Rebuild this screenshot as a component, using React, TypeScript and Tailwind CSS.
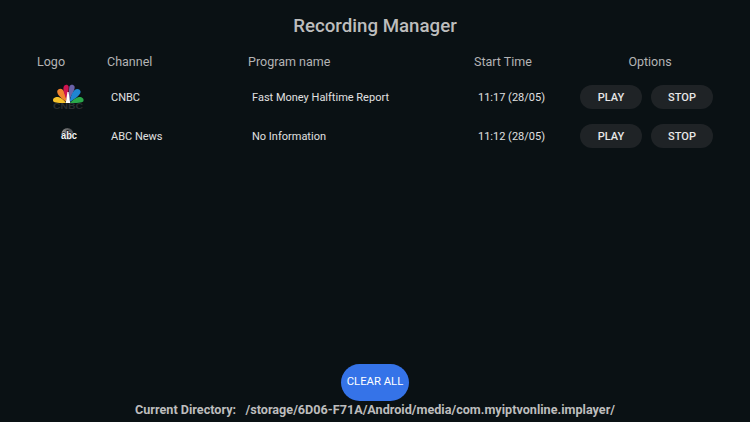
const rows = [
  { logo: "cnbc", channel: "CNBC", program: "Fast Money Halftime Report", time: "11:17 (28/05)" },
  { logo: "abc", channel: "ABC News", program: "No Information", time: "11:12 (28/05)" },
]

function CnbcLogo() {
  // feathers fan out from the white wedge in the middle
  return (
    <svg width="34" height="26" viewBox="0 0 34 26" className="ml-[14px] block">
      <path d="M15 19 C9 19 3 19 2.2 17.2 C1 14 5 12.4 8 13.2 C11 14.2 14 17 15 19 Z" fill="#f5c22b" />
      <path d="M15.4 18 C11 15 6 11 6.2 7.6 C6.6 4.6 10 4 12 6 C14 8.4 15.2 14 15.4 18 Z" fill="#f0842e" />
      <path d="M16 16 C14 12 11.6 6 12.6 3 C13.6 0 17 0.2 17.6 2.6 C18 5 16.8 12 16 16 Z" fill="#cf1550" />
      <path d="M18 16 C18 11 17.8 5 18.4 2.6 C19.2 0 22.6 0 23.6 2.6 C24.4 5.4 20 12.4 18 16 Z" fill="#6b62a8" />
      <path d="M18.6 18 C19 14 21.4 8 23.6 6 C26 4 29.4 5 29.6 7.8 C29.8 11 23 15.6 18.6 18 Z" fill="#1f85d2" />
      <path d="M19 19 C21 16.6 24 14 27 13.2 C30.4 12.4 33.4 14.4 32.4 17.2 C31.6 19 25 19 19 19 Z" fill="#2aa84a" />
      <path d="M14.8 19 L16.4 8 L17.6 8 L19.2 19 Z" fill="#ffffff" />
      <text x="17" y="25.4" textAnchor="middle" fontFamily="Liberation Sans, sans-serif" fontWeight="700" fontSize="8.5" textLength="30" lengthAdjust="spacingAndGlyphs" fill="#2b2f32">
        CNBC
      </text>
    </svg>
  )
}

function AbcLogo() {
  return (
    <svg width="18" height="16" viewBox="0 0 18 16" className="ml-[23px] block">
      <defs>
        <linearGradient id="abc-globe" x1="0" y1="1" x2="1" y2="0">
          <stop offset="0" stopColor="#dcdcdc" />
          <stop offset="1" stopColor="#2c2e30" />
        </linearGradient>
      </defs>
      <circle cx="7.5" cy="6" r="6" fill="url(#abc-globe)" />
      <text x="9" y="11.4" textAnchor="middle" fontFamily="Liberation Sans, sans-serif" fontWeight="700" fontSize="10" textLength="16" lengthAdjust="spacingAndGlyphs" stroke="#0a1114" strokeWidth="1.4" paintOrder="stroke" fill="#f4f4f4">
        abc
      </text>
    </svg>
  )
}

function PillButton({ label }: { label: string }) {
  return (
    <button
      type="button"
      className="flex h-6 w-[62px] items-center justify-center rounded-full bg-[#1f2326] pt-0.5 text-[11px] font-medium text-[#e8e8e8]"
    >
      {label}
    </button>
  )
}

export default function App() {
  return (
    <div className="flex h-[422px] w-[750px] flex-col overflow-hidden bg-[#0a1114] font-['Roboto',sans-serif]">
      <h1 className="mt-[14px] text-center text-[18.7px] leading-6 font-medium text-[#bdbdbd]">Recording Manager</h1>

      <div className="mt-[13px] grid grid-cols-[70px_141px_226px_106px_1fr] pl-[37px] text-[12.5px] leading-[22px] text-[#b4b4b4]">
        <span>Logo</span>
        <span>Channel</span>
        <span>Program name</span>
        <span>Start Time</span>
        <span className="pr-[30px] text-center">Options</span>
      </div>

      <div className="mt-[5px] flex flex-col">
        {rows.map((r) => (
          <div
            key={r.channel}
            className="grid h-[39px] grid-cols-[70px_141px_226px_106px_1fr] items-center pb-px pl-[37px] text-[11px] text-[#e0e0e0]"
          >
            <div>{r.logo === "cnbc" ? <CnbcLogo /> : <AbcLogo />}</div>
            <span className="pt-0.5 pl-1">{r.channel}</span>
            <span className="pt-0.5 pl-1">{r.program}</span>
            <span className="pt-0.5 pl-1">{r.time}</span>
            <div className="flex gap-[9px]">
              <PillButton label="PLAY" />
              <PillButton label="STOP" />
            </div>
          </div>
        ))}
      </div>

      <div className="mt-auto flex flex-col items-center pb-1">
        <button
          type="button"
          className="mb-px flex h-[37px] w-[68px] items-center justify-center rounded-full bg-[#3573e8] text-[11.3px] font-normal text-white"
        >
          CLEAR ALL
        </button>
        <p className="text-[12.63px] leading-[16px] font-bold whitespace-pre text-[#bdbdbd]">
          {"Current Directory:   /storage/6D06-F71A/Android/media/com.myiptvonline.implayer/"}
        </p>
      </div>
    </div>
  )
}
